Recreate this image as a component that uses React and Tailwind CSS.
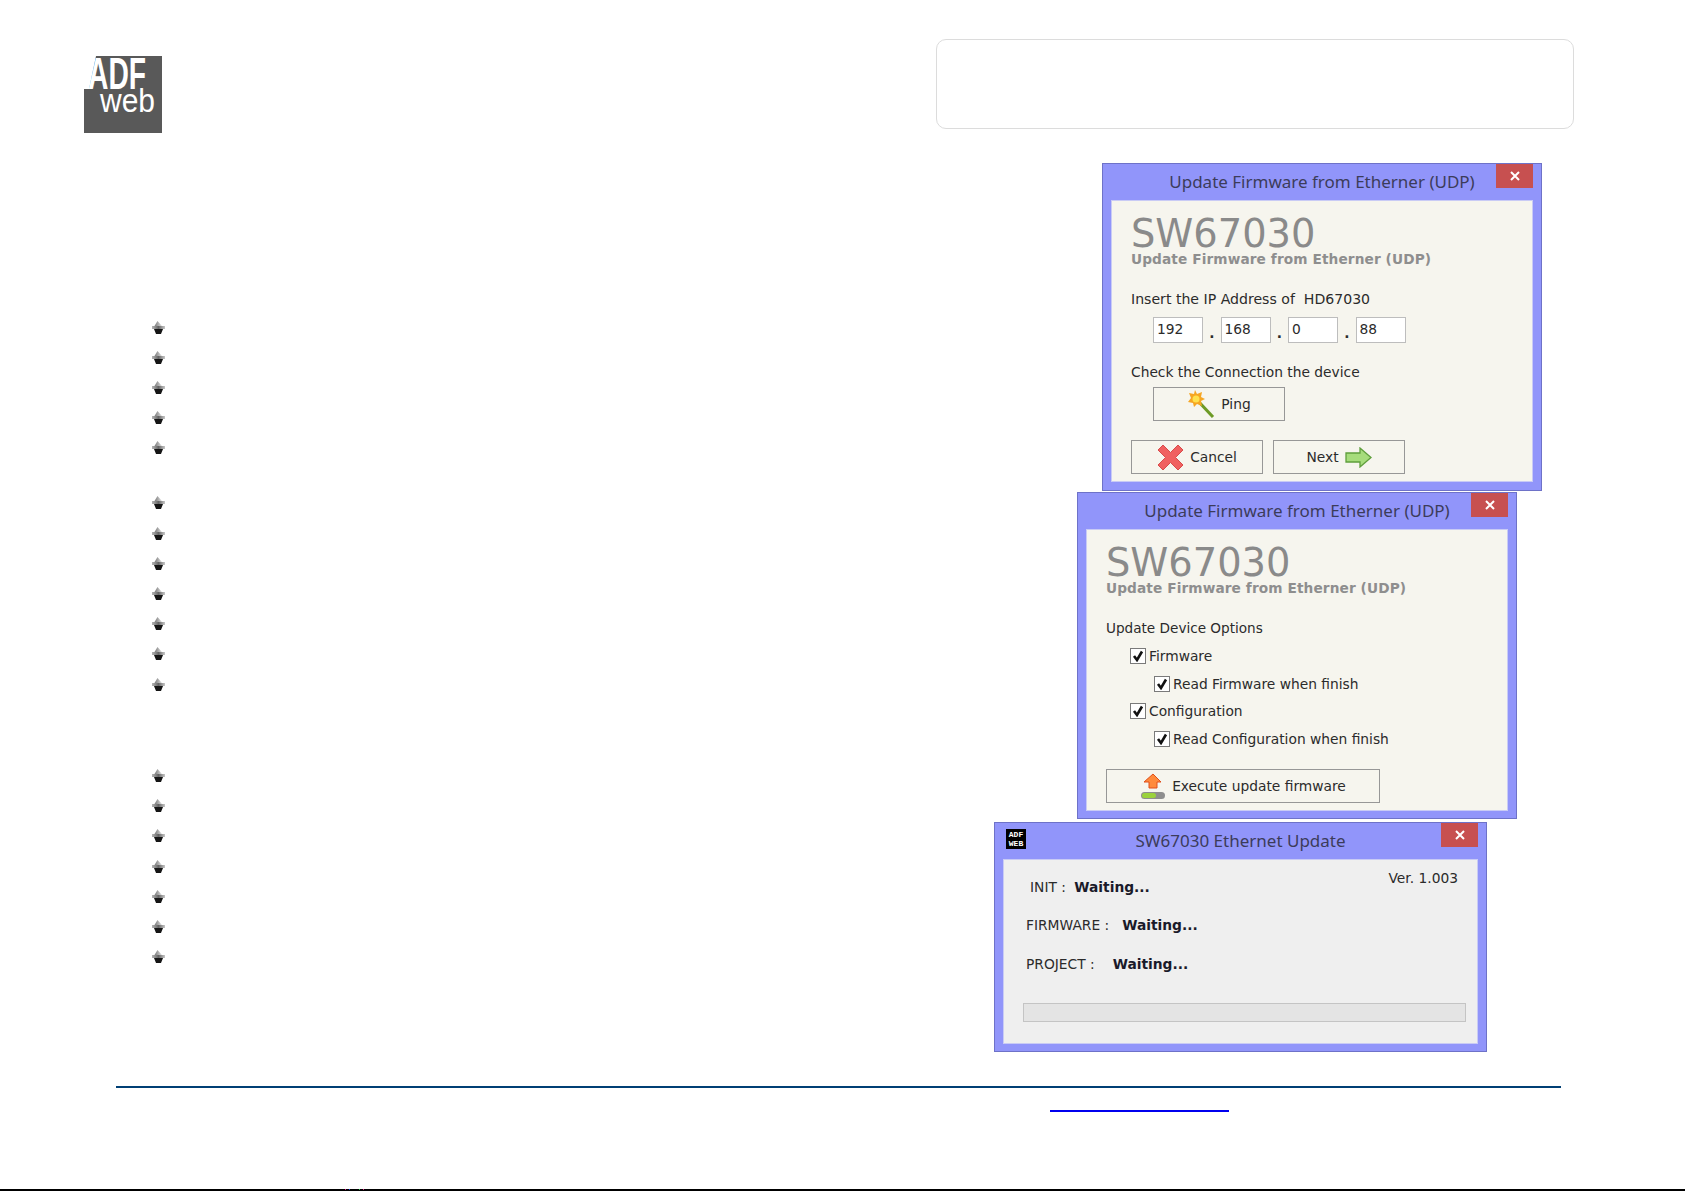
const bulletGroups = [
  { top: 328, gaps: [0, 30, 30, 30, 30, 55, 31, 30, 30, 30, 30, 31] },
  { top: 93, gaps: [0, 30, 30, 31, 30, 30, 30] },
];

const Bullet = () => (
  <svg width="14" height="14" viewBox="0 0 14 14" className="block">
    <defs>
      <linearGradient id="bulletTop" x1="0" x2="1" y1="0" y2="0">
        <stop offset="0" stopColor="#777" />
        <stop offset="1" stopColor="#e2e2e2" />
      </linearGradient>
      <linearGradient id="bulletBand" x1="0" x2="1" y1="0" y2="0">
        <stop offset="0" stopColor="#b5b5b5" />
        <stop offset="0.5" stopColor="#666" />
        <stop offset="1" stopColor="#c8c8c8" />
      </linearGradient>
    </defs>
    <path d="M5.5 0 L10 5 H2.5 Z" fill="url(#bulletTop)" />
    <rect x="0" y="5" width="13" height="3" fill="url(#bulletBand)" />
    <path d="M2 8 H11 L9 13 H4 Z" fill="#151515" />
  </svg>
);

const Logo = () => (
  <svg width="78" height="77" viewBox="0 0 78 77" className="block overflow-visible">
    <rect width="78" height="77" fill="#595959" />
    <path d="M0 0 H12 L5 33 H0 Z" fill="#fff" />
    <text x="4" y="33" textLength="58" lengthAdjust="spacingAndGlyphs" fontFamily="Liberation Sans" fontWeight="700" fontSize="45" fill="#fff">ADF</text>
    <text x="16" y="56" textLength="55" lengthAdjust="spacingAndGlyphs" fontFamily="Liberation Sans" fontSize="34" fill="#fff">web</text>
  </svg>
);

const WinTitle = ({ title, icon }) => (
  <div className="relative h-[36px] text-center text-[17px] leading-[36px] text-[#3c3c5a] font-['Noto_Sans']">
    {icon}
    {title}
    <div className="absolute top-0 right-0 w-[37px] h-[24px] bg-[#c75050] flex items-center justify-center">
      <svg width="10" height="10" viewBox="0 0 10 10">
        <path d="M1 1 L9 9 M9 1 L1 9" stroke="#fff" strokeWidth="2" />
      </svg>
    </div>
  </div>
);

const Heading = () => (
  <>
    <div className="text-[38.4px] leading-[34px] text-[#8a8a8a]">SW67030</div>
    <div className="text-[13.7px] leading-[16px] font-bold text-[#8e8e8e] tracking-[0.1px]">
      Update Firmware from Etherner (UDP)
    </div>
  </>
);

const IpBox = ({ value }) => (
  <div className="w-[50px] h-[26px] bg-white border border-[#bdbdbd] pl-[3px] leading-[22px]">{value}</div>
);

const IpDot = () => <span className="w-[17.5px] text-center font-bold">.</span>;

const Btn = ({ className, children }) => (
  <div className={`h-[34px] border border-[#979797] flex items-center justify-center gap-[6px] ${className}`}>
    {children}
  </div>
);

const Check = ({ label, className }) => (
  <div className={`flex items-center h-[18px] gap-[3px] ${className}`}>
    <div className="w-[16px] h-[16px] border border-[#7a7a7a] bg-white flex items-center justify-center">
      <svg width="12" height="12" viewBox="0 0 12 12">
        <path d="M2 6 L5 10 L10 1.5" fill="none" stroke="#111" strokeWidth="2.6" />
      </svg>
    </div>
    {label}
  </div>
);

const Window = ({ title, icon, body, className, children }) => (
  <div className={`bg-[#9195fa] border border-[#6e72c8] px-[8px] pb-[8px] ${className}`}>
    <WinTitle title={title} icon={icon} />
    <div className={`border border-[#c9cbf5] text-[13.8px] text-[#2b2b2b] font-['DejaVu_Sans'] ${body}`}>{children}</div>
  </div>
);

const Wand = () => (
  <svg width="28" height="28" viewBox="0 0 28 28">
    <path d="M11 11 L26 27" stroke="#6d9a25" strokeWidth="3" />
    <path d="M8 0 L10 4 L15 2 L14 7 L18 9 L14 11 L15 16 L10 14 L7 17 L6 13 L1 12 L4 8 L2 3 L7 4 Z" fill="#f6a623" />
    <circle cx="9" cy="9" r="3.5" fill="#ffe14d" />
  </svg>
);

const RedX = () => (
  <svg width="27" height="27" viewBox="0 0 27 27">
    <path d="M6 1 L13.5 8.5 L21 1 L26 6 L18.5 13.5 L26 21 L21 26 L13.5 18.5 L6 26 L1 21 L8.5 13.5 L1 6 Z" fill="#f06060" stroke="#d84a4a" strokeLinejoin="round" />
  </svg>
);

const NextArrow = () => (
  <svg width="27" height="21" viewBox="0 0 27 21">
    <path d="M1 6 H15 V1 L26 10.5 L15 20 V15 H1 Z" fill="#a6dc7c" stroke="#5f9e3d" strokeWidth="1.3" />
  </svg>
);

const UpdateIcon = () => (
  <svg width="26" height="27" viewBox="0 0 26 27">
    <path d="M13 1 L21 9 H17 V15 H9 V9 H4 Z" fill="#ff8a3c" stroke="#e04f1a" />
    <rect x="1" y="19" width="24" height="7" rx="3.5" fill="#8e8e8e" />
    <rect x="2" y="20" width="14" height="5" rx="2.5" fill="#9bd23c" />
  </svg>
);

const AppIcon = () => (
  <div className="absolute top-[6px] left-[3px] w-[20px] h-[20px] bg-black text-white text-[8px] leading-[9px] font-bold text-center pt-[1px] font-['Liberation_Mono']">
    ADF<br />WEB
  </div>
);

const FirstWindow = () => (
  <Window title="Update Firmware from Etherner (UDP)" body="h-[282px] bg-[#f6f5ee] px-[19px] pt-[16px]" className="w-[440px] h-[328px]">
    <Heading />
    <div className="mt-[23px] leading-[18px] text-[14.1px]">Insert the IP Address of&nbsp; HD67030</div>
    <div className="flex items-end ml-[22px] mt-[9px] h-[26px] leading-[20px]">
      <IpBox value="192" />
      <IpDot />
      <IpBox value="168" />
      <IpDot />
      <IpBox value="0" />
      <IpDot />
      <IpBox value="88" />
    </div>
    <div className="mt-[20px] leading-[18px]">Check the Connection the device</div>
    <Btn className="ml-[22px] mt-[6px] w-[132px] gap-[3px]">
      <Wand />
      <span>Ping</span>
    </Btn>
    <div className="flex gap-[10px] mt-[19px]">
      <Btn className="w-[132px]">
        <RedX />
        <span>Cancel</span>
      </Btn>
      <Btn className="w-[132px]">
        <span>Next</span>
        <NextArrow />
      </Btn>
    </div>
  </Window>
);

const SecondWindow = () => (
  <Window title="Update Firmware from Etherner (UDP)" body="h-[282px] bg-[#f6f5ee] px-[19px] pt-[16px]" className="w-[440px] h-[327px] mt-[1px] ml-[-25px]">
    <Heading />
    <div className="mt-[23px] leading-[18px] text-[13.6px]">Update Device Options</div>
    <Check label="Firmware" className="ml-[24px] mt-[10px]" />
    <Check label="Read Firmware when finish" className="ml-[48px] mt-[10px]" />
    <Check label="Configuration" className="ml-[24px] mt-[9px]" />
    <Check label="Read Configuration when finish" className="ml-[48px] mt-[10px]" />
    <Btn className="mt-[21px] w-[274px]">
      <UpdateIcon />
      <span>Execute update firmware</span>
    </Btn>
  </Window>
);

const ThirdWindow = () => (
  <Window title="SW67030 Ethernet Update" icon={<AppIcon />} body="h-[185px] bg-[#efefef] relative" className="w-[493px] h-[230px] mt-[3px] ml-[-108px]">
    <div className="absolute top-[8px] right-[19px]">Ver. 1.003</div>
    <div className="absolute top-[17px] left-[26px]">INIT : <b className="ml-[4px] text-[#1a1a2a]">Waiting...</b></div>
    <div className="absolute top-[55px] left-[22px]">FIRMWARE :<b className="ml-[13px] text-[#1a1a2a]">Waiting...</b></div>
    <div className="absolute top-[94px] left-[22px]">PROJECT :<b className="ml-[18px] text-[#1a1a2a]">Waiting...</b></div>
    <div className="absolute top-[143px] left-[19px] w-[443px] h-[19px] bg-[#e4e4e4] border border-[#c4c4c4]" />
  </Window>
);

export default function App() {
  return (
    <div className="w-[1685px] h-[1191px] bg-white relative overflow-hidden">
      <div className="flex justify-between pt-[39px] pl-[84px] pr-[111px] h-[163px]">
        <div className="pt-[17px]">
          <Logo />
        </div>
        <div className="w-[638px] h-[90px] rounded-[10px] border-[1.5px] border-[#dcdcdc]" />
      </div>
      <div className="flex h-[923px]">
        <div className="w-[1102px] pl-[152px]">
          {bulletGroups.map((group, i) => (
            <div key={i} style={{ marginTop: i === 0 ? group.top - 163 - 7 : group.top - 16 }}>
              {group.gaps.map((gap, j) => (
                <div key={j} style={{ marginTop: gap ? gap - 14 : 0 }}>
                  <Bullet />
                </div>
              ))}
            </div>
          ))}
        </div>
        <div>
          <FirstWindow />
          <SecondWindow />
          <ThirdWindow />
        </div>
      </div>
      <div className="mx-[116px] h-[2px] bg-[#003f74] w-[1445px]" />
      <div className="ml-[1050px] mt-[22px] w-[179px] h-[2px] bg-[#0000ee]" />
      <div className="absolute bottom-0 left-0 right-0 h-[2px] bg-black">
        <div className="flex gap-[3px] ml-[345px] h-[1px]">
          <span className="w-[1px] bg-[#e0208a]" />
          <span className="w-[1px] bg-[#2040e0]" />
          <span className="w-[1px] ml-[6px] bg-[#30c050]" />
          <span className="w-[1px] bg-[#e0208a]" />
        </div>
      </div>
    </div>
  );
}
